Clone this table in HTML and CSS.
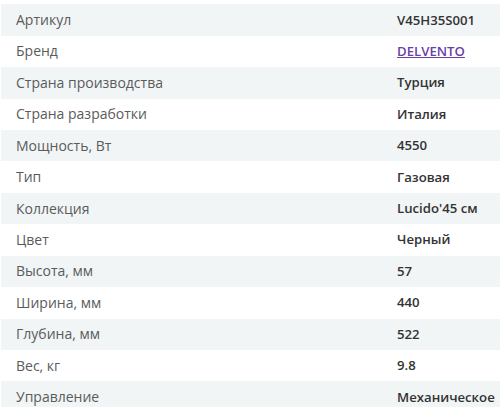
FILE: index.html
```html
<!DOCTYPE html>
<html lang="ru">
<head>
<meta charset="utf-8">
<title>Характеристики</title>
<link rel="stylesheet" href="styles.css">
</head>
<body>
<div class="specs">
  <div class="row odd"><div class="label">Артикул</div><div class="value">V45H35S001</div></div>
  <div class="row"><div class="label">Бренд</div><div class="value"><a class="brand" href="#">DELVENTO</a></div></div>
  <div class="row odd"><div class="label">Страна производства</div><div class="value">Турция</div></div>
  <div class="row"><div class="label">Страна разработки</div><div class="value">Италия</div></div>
  <div class="row odd"><div class="label">Мощность, Вт</div><div class="value">4550</div></div>
  <div class="row"><div class="label">Тип</div><div class="value">Газовая</div></div>
  <div class="row odd"><div class="label">Коллекция</div><div class="value">Lucido'45 см</div></div>
  <div class="row"><div class="label">Цвет</div><div class="value">Черный</div></div>
  <div class="row odd"><div class="label">Высота, мм</div><div class="value">57</div></div>
  <div class="row"><div class="label">Ширина, мм</div><div class="value">440</div></div>
  <div class="row odd"><div class="label">Глубина, мм</div><div class="value">522</div></div>
  <div class="row"><div class="label">Вес, кг</div><div class="value">9.8</div></div>
  <div class="row odd"><div class="label">Управление</div><div class="value">Механическое</div></div>
</div>
</body>
</html>
```

FILE: styles.css
```css
html, body {
  margin: 0;
  padding: 0;
  background: #ffffff;
}
body {
  font-family: "Open Sans", "Liberation Sans", sans-serif;
  font-size: 14px;
  overflow: hidden;
}
.specs {
  padding-top: 4.3px;
  padding-left: 1px;
}
.row {
  display: grid;
  grid-template-columns: 396px 1fr;
  height: 31.43px;
  align-items: center;
}
.row.odd {
  background: #f1f5f6;
}
.label {
  padding-left: 15px;
  color: #5b5b5b;
  white-space: nowrap;
  margin-top: -1px;
}
.value {
  color: #333333;
  font-weight: 600;
  font-size: 13.2px;
  white-space: nowrap;
  margin-top: -1px;
}
.brand {
  color: #6b3fa5;
  text-decoration: underline;
}
```
